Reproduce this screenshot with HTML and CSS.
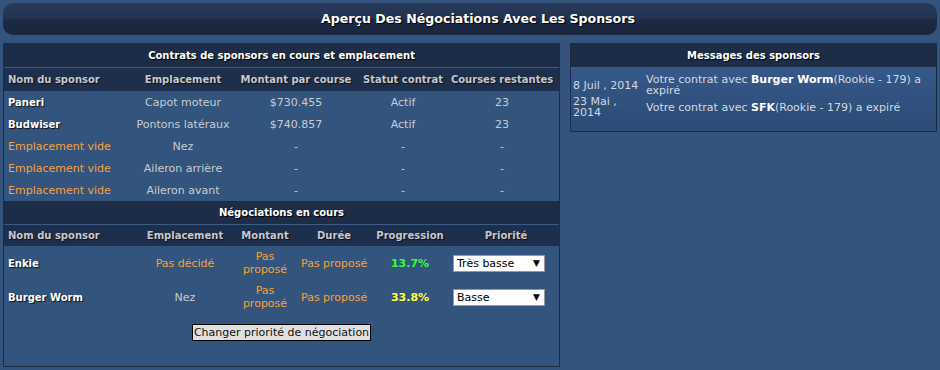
FILE: index.html
```html
<!DOCTYPE html>
<html lang="fr">
<head>
    <meta charset="UTF-8">
    <title>Aperçu Des Négociations Avec Les Sponsors</title>
    <link rel="stylesheet" href="styles.css">
</head>
<body>
    <div class="page">
        <div class="title-bar">Aperçu Des Négociations Avec Les Sponsors</div>

        <div class="content">
            <!-- Contrats + négociations -->
            <div class="panel left">
                <table class="grid contracts">
                    <colgroup>
                        <col class="c-name"><col class="c-slot"><col class="c-amount"><col class="c-status"><col class="c-left">
                    </colgroup>
                    <tr class="section"><td colspan="5">Contrats de sponsors en cours et emplacement</td></tr>
                    <tr class="heads">
                        <th class="first">Nom du sponsor</th>
                        <th>Emplacement</th>
                        <th>Montant par course</th>
                        <th>Statut contrat</th>
                        <th>Courses restantes</th>
                    </tr>
                    <tr class="row">
                        <td class="name">Paneri</td><td>Capot moteur</td><td>$730.455</td><td>Actif</td><td>23</td>
                    </tr>
                    <tr class="row">
                        <td class="name">Budwiser</td><td>Pontons latéraux</td><td>$740.857</td><td>Actif</td><td>23</td>
                    </tr>
                    <tr class="row">
                        <td class="empty">Emplacement vide</td><td>Nez</td><td>-</td><td>-</td><td>-</td>
                    </tr>
                    <tr class="row">
                        <td class="empty">Emplacement vide</td><td>Aileron arrière</td><td>-</td><td>-</td><td>-</td>
                    </tr>
                    <tr class="row">
                        <td class="empty">Emplacement vide</td><td>Aileron avant</td><td>-</td><td>-</td><td>-</td>
                    </tr>
                </table>

                <table class="grid nego">
                    <colgroup>
                        <col class="n-name"><col class="n-slot"><col class="n-amount"><col class="n-length"><col class="n-prog"><col class="n-prio">
                    </colgroup>
                    <tr class="section"><td colspan="6">Négociations en cours</td></tr>
                    <tr class="heads">
                        <th class="first">Nom du sponsor</th>
                        <th>Emplacement</th>
                        <th>Montant</th>
                        <th>Durée</th>
                        <th>Progression</th>
                        <th>Priorité</th>
                    </tr>
                    <tr class="row tall">
                        <td class="name">Enkie</td>
                        <td class="orange">Pas décidé</td>
                        <td class="orange">Pas<br>proposé</td>
                        <td class="orange">Pas proposé</td>
                        <td class="prog green">13.7%</td>
                        <td class="prio"><span class="pick"><select><option>Très basse</option></select></span></td>
                    </tr>
                    <tr class="row tall">
                        <td class="name">Burger Worm</td>
                        <td>Nez</td>
                        <td class="orange">Pas<br>proposé</td>
                        <td class="orange">Pas proposé</td>
                        <td class="prog yellow">33.8%</td>
                        <td class="prio"><span class="pick"><select><option>Basse</option></select></span></td>
                    </tr>
                </table>

                <div class="actions">
                    <button>Changer priorité de négociation</button>
                </div>
            </div>

            <!-- Messages -->
            <div class="panel right">
                <div class="section-title">Messages des sponsors</div>
                <div class="messages">
                    <div class="msg">
                        <div class="date">8 Juil , 2014</div>
                        <div class="text">Votre contrat avec <b>Burger Worm</b>(Rookie - 179) a expiré</div>
                    </div>
                    <div class="msg">
                        <div class="date">23 Mai , 2014</div>
                        <div class="text">Votre contrat avec <b>SFK</b>(Rookie - 179) a expiré</div>
                    </div>
                </div>
            </div>
        </div>
    </div>
</body>
</html>
```

FILE: styles.css
```css
body {
    margin: 0;
    background-color: #34547e;
    font-family: "DejaVu Sans", Verdana, sans-serif;
    font-size: 11px;
    color: #c8ccd2;
}
.page {
    padding: 3px;
}
.title-bar {
    height: 32px;
    line-height: 31px;
    padding-left: 16px;
    border-radius: 10px;
    background: linear-gradient(#283a5a 0%, #223250 50%, #1c2a44 50%, #1a263e 100%);
    color: white;
    font-weight: bold;
    font-size: 12.6px;
    text-align: center;
    text-shadow: 1px 1px 1px #000;
}
.content {
    display: flex;
    gap: 10px;
    margin-top: 8px;
    align-items: flex-start;
}
.panel {
    border: 1px solid #1d2c47;
    background-color: #33547d;
}
.left {
    width: 555px;
    height: 322px;
}
.right {
    width: 366px;
}
table.grid {
    width: 100%;
    border-collapse: collapse;
    table-layout: fixed;
}
.c-name { width: 131px; }
.c-slot { width: 96px; }
.c-amount { width: 130px; }
.c-status { width: 84px; }
.c-left { width: 114px; }
.n-name { width: 137px; }
.n-slot { width: 88px; }
.n-amount { width: 72px; }
.n-length { width: 66px; }
.n-prog { width: 86px; }
.n-prio { width: 106px; }
.section td, .section-title {
    background-color: #1d2c47;
    color: white;
    font-weight: bold;
    font-size: 10px;
    text-align: center;
    height: 23px;
    padding: 0;
    border-bottom: 1px solid #3d5c84;
    text-shadow: 1px 1px 1px #000;
}
.section-title {
    line-height: 23px;
}
.heads th {
    background-color: #1e2f4d;
    color: #c4c8ce;
    font-weight: bold;
    font-size: 10px;
    height: 23px;
    padding: 0;
    white-space: nowrap;
    text-shadow: 1px 1px 1px #111;
}
.nego .heads th {
    height: 21px;
}
.heads th.first, .row td.name, .row td.empty {
    text-align: left;
    padding-left: 4px;
}
.row td {
    height: 22px;
    padding: 0;
    text-align: center;
    white-space: nowrap;
}
.row.tall td {
    height: 34px;
    line-height: 13px;
}
.row td.name {
    color: white;
    font-weight: bold;
    font-size: 10px;
    text-shadow: 1px 1px 1px #111;
}
.row td.empty, .row td.orange {
    color: #f7a03c;
}
.prog {
    font-weight: bold;
}
.green {
    color: #33ff33;
}
.yellow {
    color: #ffff33;
}
.row td.prio {
    text-align: left;
    padding-left: 0;
}
.pick {
    position: relative;
    display: inline-block;
}
.pick select {
    appearance: none;
    width: 92px;
    height: 17px;
    padding: 0 0 0 3px;
    border: 1px solid #999;
    border-radius: 0;
    background: white;
    color: black;
    font-family: "DejaVu Sans", Verdana, sans-serif;
    font-size: 11px;
}
.pick::after {
    content: "▼";
    position: absolute;
    right: 5px;
    top: 2px;
    font-size: 9px;
    color: black;
    pointer-events: none;
}
.actions {
    text-align: center;
    margin-top: 10px;
}
.actions button {
    font-family: "DejaVu Sans", Verdana, sans-serif;
    font-size: 11px;
    padding: 1px 1px;
    border: 1px solid #000;
    border-radius: 0;
    background-color: #e0e0e0;
    color: #111;
}
.messages {
    padding: 6px 0 13px;
    background: linear-gradient(#36598a, #2c4a74);
}
.msg {
    display: flex;
    align-items: center;
    padding: 0 1px 0 2px;
    line-height: 11px;
    color: #d4d9e0;
}
.msg .date {
    width: 73px;
    flex-shrink: 0;
}
.msg .text {
    flex: 1;
}
.msg b {
    color: white;
}
```
